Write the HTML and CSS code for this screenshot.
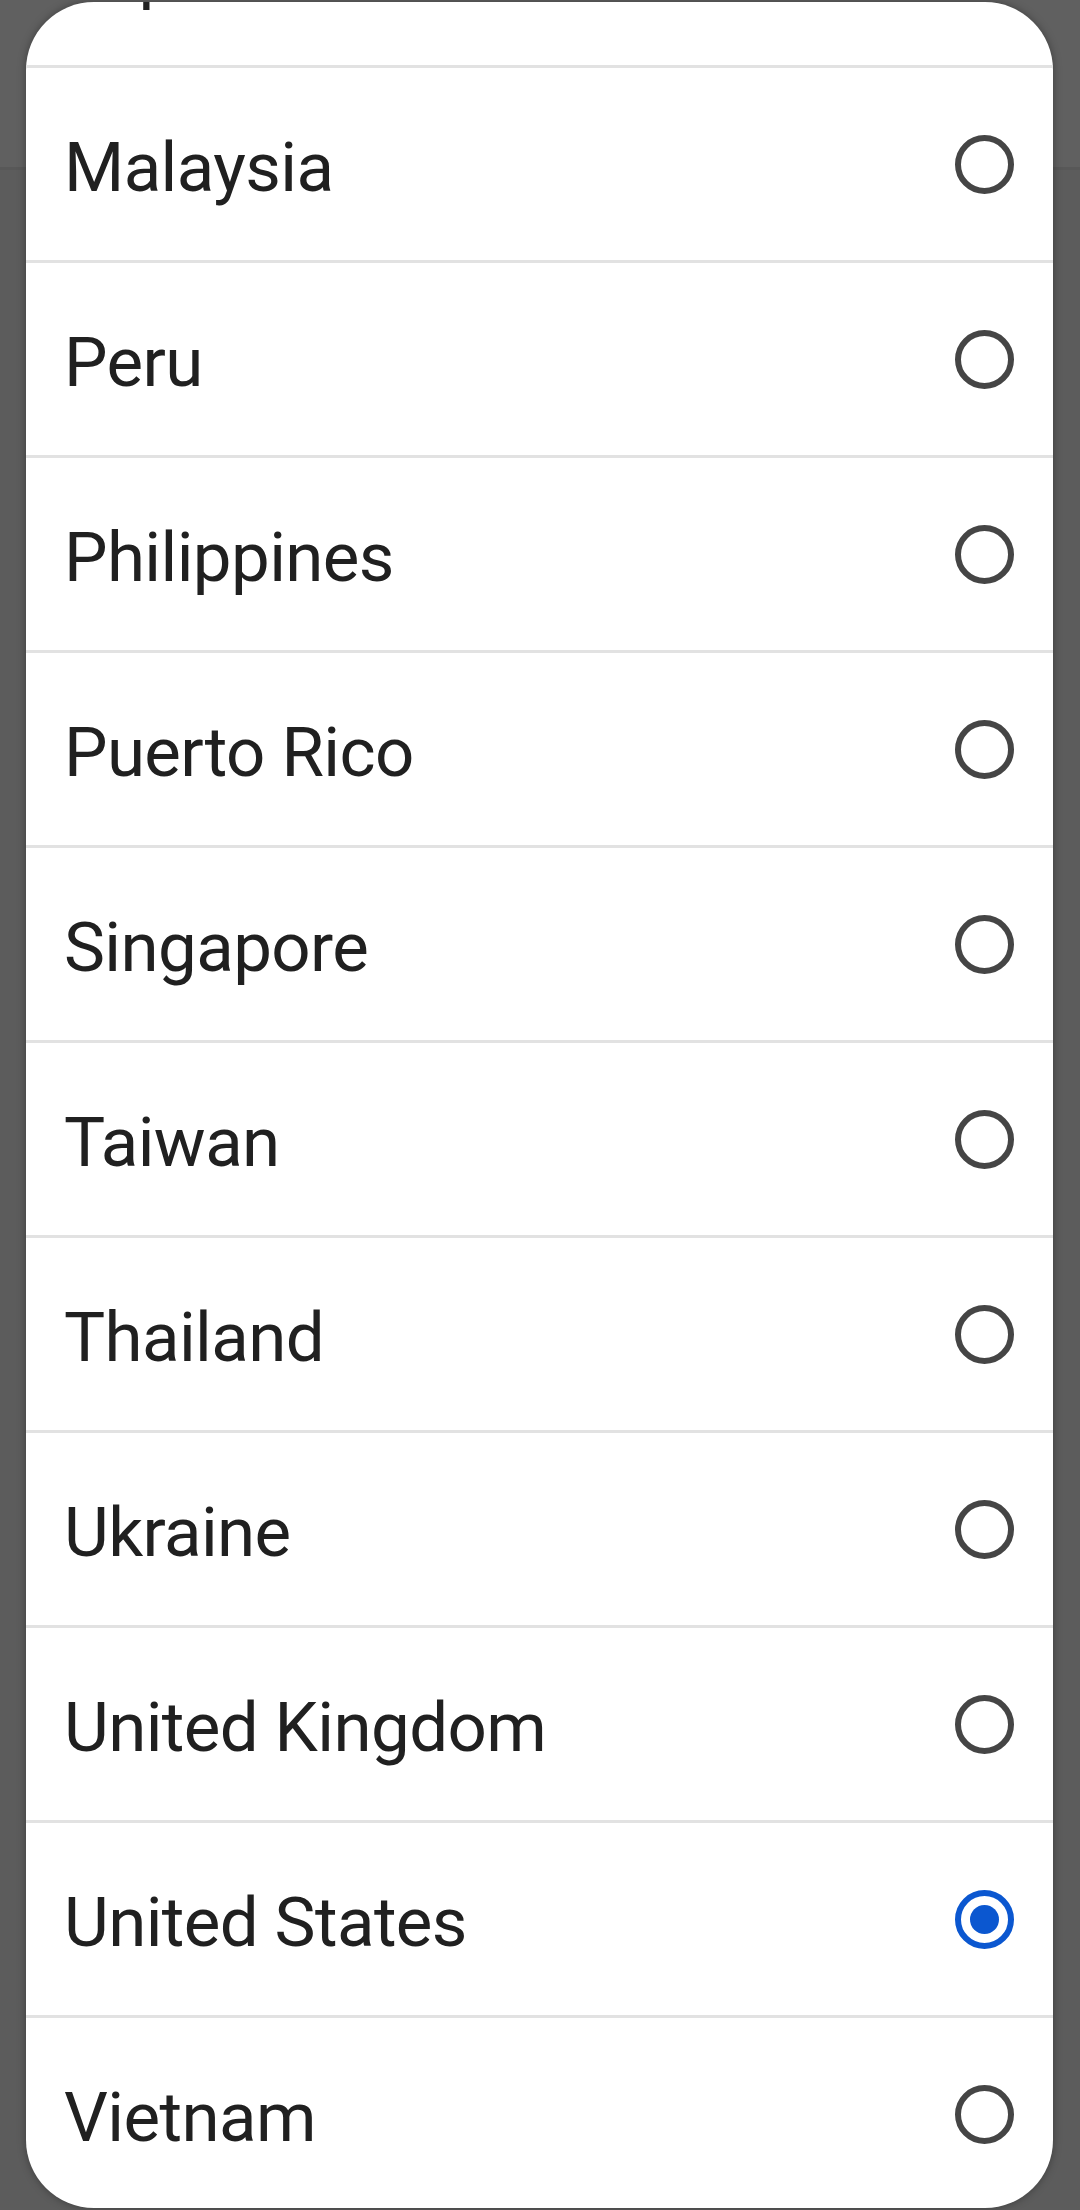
FILE: index.html
```html
<!DOCTYPE html>
<html lang="en">
<head>
    <meta charset="UTF-8">
    <meta name="viewport" content="width=device-width, initial-scale=1.0">
    <title>Country / Region</title>
    <link rel="stylesheet" href="styles.css">
</head>
<body>

<!-- Página de fundo escurecida -->
<div class="backdrop">
    <div class="backdrop-header"></div>
    <div class="backdrop-body"></div>
</div>

<!-- Diálogo de seleção -->
<div class="dialog">
    <ul class="country-list">
        <li class="country"><span class="name">Japan</span><span class="radio"></span></li>
        <li class="country"><span class="name">Malaysia</span><span class="radio"></span></li>
        <li class="country"><span class="name">Peru</span><span class="radio"></span></li>
        <li class="country"><span class="name">Philippines</span><span class="radio"></span></li>
        <li class="country"><span class="name">Puerto Rico</span><span class="radio"></span></li>
        <li class="country"><span class="name">Singapore</span><span class="radio"></span></li>
        <li class="country"><span class="name">Taiwan</span><span class="radio"></span></li>
        <li class="country"><span class="name">Thailand</span><span class="radio"></span></li>
        <li class="country"><span class="name">Ukraine</span><span class="radio"></span></li>
        <li class="country"><span class="name">United Kingdom</span><span class="radio"></span></li>
        <li class="country"><span class="name">United States</span><span class="radio checked"></span></li>
        <li class="country"><span class="name">Vietnam</span><span class="radio"></span></li>
    </ul>
</div>

</body>
</html>
```

FILE: styles.css
```css
* {
    margin: 0;
    padding: 0;
    box-sizing: border-box;
    font-family: Roboto, "Noto Sans", sans-serif;
}
body {
    width: 1080px;
    height: 2210px;
    overflow: hidden;
    background: #5b5b5b;
    position: relative;
}
.backdrop {
    display: flex;
    flex-direction: column;
    height: 100%;
}
.backdrop-header {
    height: 170px;
    background: #606060;
    border-bottom: 3px solid #585858;
}
.backdrop-body {
    flex: 1;
    background: #5c5c5c;
}
.dialog {
    position: absolute;
    top: 2px;
    left: 26px;
    right: 27px;
    bottom: 2px;
    background: #fff;
    border-radius: 68px;
    overflow: hidden;
    box-shadow: 0 0 8px rgba(0, 0, 0, 0.35);
}
.country-list {
    list-style: none;
    margin-top: -129px;
}
.country {
    display: flex;
    align-items: center;
    justify-content: space-between;
    height: 195px;
    padding: 0 39px 0 38px;
    border-bottom: 3px solid #e2e2e2;
}
.country .name {
    font-size: 69px;
    letter-spacing: -0.6px;
    color: #202020;
    line-height: 1;
    padding-top: 6px;
}
.radio {
    width: 59px;
    height: 59px;
    border: 6px solid #454545;
    border-radius: 50%;
    display: flex;
    align-items: center;
    justify-content: center;
    flex-shrink: 0;
}
.radio.checked {
    border-color: #0b57d0;
}
.radio.checked::after {
    content: "";
    width: 29px;
    height: 29px;
    border-radius: 50%;
    background: #0b57d0;
}
```
